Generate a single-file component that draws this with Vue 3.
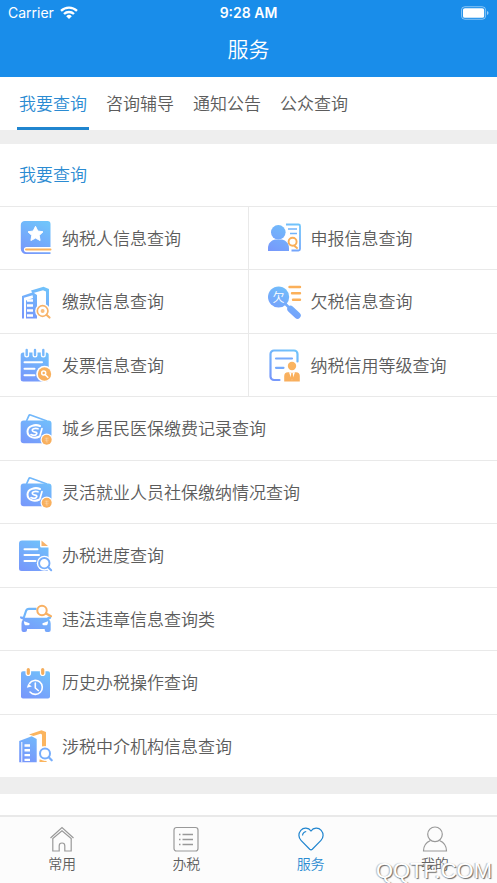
<template>
  <div class="page">
    <header class="header">
      <div class="status">
        <div class="carrier">
          <span>Carrier</span>
          <svg class="wifi" viewBox="0 0 18 13" aria-hidden="true">
            <g fill="none" stroke="#fff" stroke-width="2.3">
              <path d="M1 4.8a11.5 11.5 0 0 1 16 0" />
              <path d="M4 8a7.2 7.2 0 0 1 10 0" />
            </g>
            <path d="M9 13 6.2 10.2a4 4 0 0 1 5.6 0z" fill="#fff" />
          </svg>
        </div>
        <span class="time">9:28 AM</span>
        <div class="power">
          <svg class="battery" viewBox="0 0 29 14" aria-hidden="true">
            <rect x="0.5" y="0.5" width="25" height="13" rx="3.5" fill="none" stroke="#fff" stroke-opacity="0.5" />
            <rect x="2" y="2" width="22" height="10" rx="2" fill="#fff" />
            <path d="M27 5v4q1.5-.6 1.5-2T27 5z" fill="#fff" fill-opacity="0.6" />
          </svg>
        </div>
      </div>
      <h1 class="title">服务</h1>
    </header>

    <nav class="tabs">
      <button
        v-for="(tab, i) in tabs"
        :key="tab"
        type="button"
        class="tab"
        :class="{ active: i === activeTab }"
        @click="activeTab = i"
      >
        {{ tab }}
      </button>
    </nav>

    <main class="content">
      <section class="panel">
        <h2 class="panel-title">我要查询</h2>
        <ul class="grid">
          <li v-for="item in items" :key="item.name" class="cell" :class="{ wide: item.wide }">
            <a href="#" class="link" @click.prevent>
              <svg class="icon" viewBox="0 0 36 36" aria-hidden="true">
                <g v-if="item.icon === 'book'">
                  <path d="M7 1h22.500a3 3 0 0 1 3 3v23H8.500a2.500 2.500 0 0 0 0 5.200h24V34H8a5.200 5.200 0 0 1-5.200-5.200V5A4 4 0 0 1 7 1z" fill="url(#blue)" />
                  <path d="m17.500 6.300 2.300 4.700 5.200.8-3.800 3.600.9 5.100-4.600-2.400-4.600 2.400.9-5.100-3.800-3.600 5.200-.8z" fill="#fff" stroke="#fff" stroke-linejoin="round" />
                  <path d="M8 29.500h24.500" stroke="#fbb25c" stroke-width="2" stroke-linecap="round" />
                </g>

                <g v-else-if="item.icon === 'declare'">
                  <path d="M19 4.500h12.500a1.500 1.500 0 0 1 1.500 1.500v23a1.500 1.500 0 0 1-1.500 1.500h-7" fill="none" stroke="url(#blue)" stroke-width="1.800" />
                  <path d="M21 9h9M23 13.500h7" stroke="#72b4fb" stroke-width="1.600" />
                  <circle cx="11.300" cy="12.300" r="7.300" fill="url(#blue)" />
                  <path d="M1 31v-3c0-4.500 3-7.500 7-8.500h7c4 1 7 4 7 8.500v3z" fill="url(#blue)" />
                  <circle cx="25.600" cy="21.800" r="4" fill="#fff" stroke="#f9ae58" stroke-width="1.900" />
                  <path d="m27.500 26 2.500 2" stroke="#f9ae58" stroke-width="2" stroke-linecap="round" />
                </g>

                <g v-else-if="item.icon === 'payment'">
                  <path d="m13 6.500 12.500-3.700L31 5v18l-3-2V7.500l-3-1.300-10.500 3z" fill="url(#blue)" />
                  <path d="m4 12 11-3.700L19 11v23.500H4zm2 1.800v20.700h2v-18l7-2.500-.4-2.800z" fill="url(#blue)" fill-rule="evenodd" />
                  <path d="M9 16.500h6M9 21.500h6M9 26.500h6M9 31.500h6" stroke="#fff" stroke-width="2.600" />
                  <circle cx="24.600" cy="27" r="7.500" fill="#fff" />
                  <circle cx="24.600" cy="27" r="5.300" fill="#fff" stroke="#f7b267" stroke-width="1.700" />
                  <circle cx="24.600" cy="27" r="2" fill="#f9bd7b" />
                  <path d="m28.700 31 2.800 2.500" stroke="#f7b267" stroke-width="2.200" stroke-linecap="round" />
                </g>

                <g v-else-if="item.icon === 'arrears'">
                  <path d="m18 19.500 4.500 4.500" stroke="#76acfc" stroke-width="2.500" />
                  <path d="m23.500 25 7 6.500" stroke="url(#blue)" stroke-width="6.500" stroke-linecap="round" />
                  <circle cx="11.600" cy="13" r="10.600" fill="url(#blue)" />
                  <path d="M22.500 3h10.500M25 9.300h8M26 15.700h7" stroke="#fbb05a" stroke-width="2.400" stroke-linecap="round" />
                  <text x="11.600" y="17.500" text-anchor="middle" class="glyph">欠</text>
                </g>

                <g v-else-if="item.icon === 'invoice'">
                  <rect x="2.700" y="5.500" width="28" height="29" rx="2.500" fill="url(#blue)" />
                  <path d="M8.700 3v5M17 3v5M25.300 3v5" stroke="#fff" stroke-width="5" stroke-linecap="round" />
                  <path d="M8.700 3v5M17 3v5M25.300 3v5" stroke="#78b8fc" stroke-width="2.400" stroke-linecap="round" />
                  <path d="M6.500 15.200H24M6.500 21.800h10M6.500 28.200h10" stroke="#fff" stroke-width="2" stroke-linecap="round" />
                  <circle cx="26.500" cy="27" r="8.300" fill="#fff" />
                  <circle cx="26.500" cy="27" r="6.700" fill="url(#orange)" />
                  <circle cx="25.700" cy="26" r="2" fill="none" stroke="#fff" stroke-width="1.500" />
                  <path d="m27.200 27.700 2.600 2.600" stroke="#fff" stroke-width="1.600" stroke-linecap="round" />
                </g>

                <g v-else-if="item.icon === 'credit'">
                  <path d="M30.500 14.500V7a3.500 3.500 0 0 0-3.500-3.500H7A3.500 3.500 0 0 0 3.500 7v22.500A3.500 3.500 0 0 0 7 33h5.500" fill="none" stroke="url(#blue)" stroke-width="2.200" stroke-linecap="round" />
                  <path d="M9 11.500h16M9 20.800h7.500" stroke="#76aafc" stroke-width="2.200" stroke-linecap="round" />
                  <circle cx="25" cy="19" r="4.200" fill="url(#orange)" />
                  <path d="M17.200 34.500V29q0-3.800 3.800-3.800h8q3.800 0 3.800 3.800v5.500z" fill="url(#orange)" />
                  <path d="m22 25.200 3 8.300 3-8.300" fill="#fff" />
                  <path d="m24.300 26-.7 5.500 1.400 2 1.400-2-.7-5.500z" fill="#fbb05a" />
                </g>

                <g v-else-if="item.icon === 'wallet'">
                  <path d="m8.500 10 2.300-5.200q.5-1.200 1.700-.8l16.500 6" fill="none" stroke="#72b8fb" stroke-width="1.700" />
                  <rect x="2.700" y="9.500" width="30.800" height="22.700" rx="3" fill="url(#blue)" />
                  <path d="M22 15c-4.500-2-12.500-.3-12.500 5.500s7 7.500 12 5" fill="none" stroke="#fff" stroke-width="2" stroke-linecap="round" />
                  <path d="M20 17.800c-3-1-6.500.2-5.500 2s5.300.8 4.200 3-4.200 1.500-5.700.8M24 17.500l-2 7" fill="none" stroke="#fff" stroke-width="1.700" stroke-linecap="round" />
                  <circle cx="28.700" cy="28.700" r="6.200" fill="#fff" />
                  <circle cx="28.700" cy="28.700" r="5" fill="url(#orange)" />
                  <path d="M26.700 27.200h4M26.700 29.200h4M27.700 31h2.500M28.700 26.700v4" stroke="#fff" stroke-opacity="0.400" stroke-width="0.700" />
                </g>

                <g v-else-if="item.icon === 'progress'">
                  <path d="M4 2.500h18V8a1.500 1.500 0 0 0 1.500 1.500h7V31a2 2 0 0 1-2 2H3.500a2.500 2.500 0 0 1-2.500-2.500v-25a3 3 0 0 1 3-3z" fill="url(#blue)" />
                  <path d="M23.500 2.500 30 8h-6.500z" fill="#f8b36a" />
                  <path d="M6.500 11.300h13M6.500 17h14.500M6.500 23h11" stroke="#fff" stroke-width="2" stroke-linecap="round" />
                  <circle cx="26.300" cy="25.200" r="7.500" fill="#fff" />
                  <path d="m30 29 3.500 3.500" stroke="#fff" stroke-width="5" />
                  <circle cx="26.300" cy="25.200" r="5.200" fill="#fff" stroke="#76adfb" stroke-width="1.900" />
                  <path d="m30 29 3.200 3.200" stroke="#76adfb" stroke-width="2" stroke-linecap="round" />
                </g>

                <g v-else-if="item.icon === 'car'">
                  <path d="M5.500 17.500 8 10q.7-2.200 3-2.200h7.500" fill="none" stroke="#70b6fb" stroke-width="2.200" />
                  <path d="M2 15.500q3-.5 4 1.300h23q1-1.800 4-1.300.8 2.300-2 3 1.700 1.500 1.700 4V29q0 2-2 2h-2q-2 0-2-2v-1H9v1q0 2-2 2H5.500q-2 0-2-2v-6.500q0-2.500 1.500-4-3.500-.7-3-3z" fill="url(#blue)" />
                  <path d="m6 20.300 5.500 2q.5 2-1 2H7.500Q6 24 6 20.300zm24 0-5.500 2q-.5 2 1 2h3q1.500-.3 1.500-4z" fill="#fff" />
                  <circle cx="24" cy="9.500" r="4.700" fill="#fff" stroke="#f8b062" stroke-width="2" />
                  <path d="m28 12.500 5 2.700" stroke="#f8b062" stroke-width="2.200" stroke-linecap="round" />
                </g>

                <g v-else-if="item.icon === 'history'">
                  <rect x="3" y="6.200" width="29" height="27.300" rx="2" fill="url(#blue)" />
                  <path d="M10.300 4.500v3.800M24.700 4.500v3.800" stroke="#fff" stroke-width="5.600" stroke-linecap="round" />
                  <path d="M10.300 4.500v3.800M24.700 4.500v3.800" stroke="#f4ad5c" stroke-width="3.200" stroke-linecap="round" />
                  <path d="M11.500 18.500a7 7 0 1 1 .5 8.500" fill="none" stroke="#fff" stroke-width="1.600" stroke-linecap="round" />
                  <path d="m8.800 22.700 1.500-4 3.500 2.700z" fill="#fff" />
                  <path d="M17.300 18v5l3 2.500" fill="none" stroke="#fff" stroke-width="1.600" stroke-linecap="round" />
                </g>

                <g v-else-if="item.icon === 'agency'">
                  <path d="m11 6.500 12.500-4.300L28 4v14.500h-4V6.500l-1.500-.8-7 2.300z" fill="#fbb55f" />
                  <path d="M21.500 31.500H27l2 2.500h-7.500z" fill="#fbb55f" />
                  <path d="m1.200 13 12.500-4.700 5 2.700v23.200H1.200z" fill="url(#blue)" />
                  <path d="M3.800 14v20.200" stroke="#fff" stroke-width="1" />
                  <path d="M6.500 17.500h5.500M6.500 22.300h5.500M6.500 27.100h5.500M6.500 31.900h5.500" stroke="#fff" stroke-width="2.400" />
                  <circle cx="27" cy="25.600" r="7.300" fill="#fff" />
                  <circle cx="27" cy="25.600" r="5" fill="#fff" stroke="#76adfb" stroke-width="2" />
                  <path d="m30.700 29.300 3 3" stroke="#76adfb" stroke-width="2.200" stroke-linecap="round" />
                </g>
              </svg>
              <span class="name">{{ item.name }}</span>
            </a>
          </li>
        </ul>
      </section>
      <section class="panel next"></section>
    </main>

    <footer class="tabbar">
      <button
        v-for="entry in menu"
        :key="entry.name"
        type="button"
        class="menu"
        :class="{ active: entry.name === current }"
        @click="current = entry.name"
      >
        <svg class="menu-icon" viewBox="0 0 26 26" aria-hidden="true">
          <g v-if="entry.icon === 'home'">
            <path d="M1.500 12 13 1.500 24.500 12M3.800 12.500V25h6.400v-5.200a2.800 2.800 0 0 1 5.600 0V25h6.400V12.500L13 4.800z" />
          </g>
          <g v-else-if="entry.icon === 'list'">
            <rect x="1" y="1.500" width="24" height="23.500" rx="2.500" />
            <path d="M9.500 8.500H20M9.500 13.500H20M9.500 18.500H20M6 8.500h1.500M6 13.500h1.500M6 18.500h1.500" stroke-width="1.700" />
          </g>
          <g v-else-if="entry.icon === 'heart'">
            <path d="M13 5C10.500 1.300 5.500 1.300 2.800 4.300.2 7.300.3 11.500 3 14.300l8.700 8.900q1.300 1.200 2.600 0l8.700-8.900c2.700-2.800 2.800-7 .2-10C20.500 1.300 15.500 1.300 13 5z" />
            <path d="M4.500 9.500q.3-3.300 3.700-4" />
          </g>
          <g v-else>
            <circle cx="13" cy="8.300" r="7.300" />
            <path d="M8.500 14.500Q1.500 17.500 1.500 25h23q0-7.500-7-10.500" />
          </g>
        </svg>
        <span>{{ entry.name }}</span>
      </button>
      <span class="watermark">QQTF.COM</span>
    </footer>

    <svg class="defs" aria-hidden="true">
      <defs>
        <linearGradient id="blue" gradientUnits="userSpaceOnUse" x1="26" y1="2" x2="10" y2="34">
          <stop offset="0" stop-color="#70c4fb" />
          <stop offset="1" stop-color="#7798fb" />
        </linearGradient>
        <linearGradient id="orange" gradientUnits="userSpaceOnUse" x1="26" y1="15" x2="26" y2="35">
          <stop offset="0" stop-color="#fab562" />
          <stop offset="1" stop-color="#f8ae5c" />
        </linearGradient>
      </defs>
    </svg>
  </div>
</template>

<script setup>
import { ref } from "vue";

const tabs = ["我要查询", "咨询辅导", "通知公告", "公众查询"];
const activeTab = ref(0);

const items = [
  { name: "纳税人信息查询", icon: "book" },
  { name: "申报信息查询", icon: "declare" },
  { name: "缴款信息查询", icon: "payment" },
  { name: "欠税信息查询", icon: "arrears" },
  { name: "发票信息查询", icon: "invoice" },
  { name: "纳税信用等级查询", icon: "credit" },
  { name: "城乡居民医保缴费记录查询", icon: "wallet", wide: true },
  { name: "灵活就业人员社保缴纳情况查询", icon: "wallet", wide: true },
  { name: "办税进度查询", icon: "progress", wide: true },
  { name: "违法违章信息查询类", icon: "car", wide: true },
  { name: "历史办税操作查询", icon: "history", wide: true },
  { name: "涉税中介机构信息查询", icon: "agency", wide: true },
];

const menu = [
  { name: "常用", icon: "home" },
  { name: "办税", icon: "list" },
  { name: "服务", icon: "heart" },
  { name: "我的", icon: "user" },
];
const current = ref("服务");
</script>

<style>
body {
  margin: 0;
}
</style>

<style scoped>
.page {
  display: flex;
  flex-direction: column;
  height: 100vh;
  overflow: hidden;
  background: #fff;
  color: #5c5c5c;
  font-family: "Liberation Sans", "Noto Sans CJK SC", sans-serif;
  font-weight: 350;
}

.page * {
  box-sizing: border-box;
}

button {
  padding: 0;
  border: 0;
  background: none;
  color: inherit;
  font: inherit;
  cursor: pointer;
}

.header {
  flex: none;
  background: #198dea;
  color: #fff;
}

.status {
  display: grid;
  grid-template-columns: 1fr auto 1fr;
  align-items: center;
  height: 25px;
  padding: 0 8px;
  font-family: Inter, sans-serif;
  font-size: 14px;
  font-weight: 400;
}

.carrier {
  display: flex;
  align-items: center;
  gap: 6px;
}

.wifi {
  width: 18px;
  height: 13px;
}

.time {
  font-weight: 600;
}

.power {
  display: flex;
  justify-content: flex-end;
}

.battery {
  width: 28px;
  height: 14px;
}

.title {
  margin: 0;
  font-size: 21px;
  font-weight: 350;
  line-height: 50px;
  height: 52px;
  text-align: center;
}

.tabs {
  flex: none;
  display: flex;
  gap: 15px;
  height: 53px;
  padding: 0 17px;
}

.tab {
  height: 53px;
  padding: 0 2px;
  border-bottom: 3px solid transparent;
  font-size: 17px;
  white-space: nowrap;
}

.tab.active {
  border-bottom-color: #2085cf;
  color: #2b8bd2;
}

.content {
  flex: 1;
  min-height: 0;
  overflow: hidden;
  padding-top: 14px;
  background: #eee;
}

.panel {
  background: #fff;
}

.panel-title {
  margin: 0;
  padding-left: 19px;
  color: #2b8bd2;
  font-size: 17px;
  font-weight: 350;
  line-height: 64px;
  height: 62px;
}

.grid {
  display: grid;
  grid-template-columns: calc(50% - 1px) 1fr;
  grid-auto-rows: 63px 64px;
  margin: 0;
  padding: 0;
  list-style: none;
}

.cell {
  border-top: 1px solid #e9e9e9;
}

.cell:nth-child(even):not(.wide) {
  border-left: 1px solid #e9e9e9;
}

.wide {
  grid-column: 1 / -1;
}

.link {
  display: flex;
  align-items: center;
  gap: 8px;
  height: 100%;
  padding-left: 18px;
  color: inherit;
  font-size: 17px;
  text-decoration: none;
  white-space: nowrap;
}

.name {
  padding-bottom: 2px;
}

.icon {
  flex: none;
  width: 36px;
  height: 36px;
}

.glyph {
  fill: #fff;
  font-size: 12px;
}

.next {
  height: 62px;
  margin-top: 17px;
}

.tabbar {
  position: relative;
  flex: none;
  display: flex;
  height: 68px;
  border-top: 2px solid #e9e9e9;
  background: #fcfcfc;
}

.menu {
  flex: 1;
  display: flex;
  flex-direction: column;
  align-items: center;
  gap: 2px;
  padding-top: 9px;
  font-size: 14px;
  line-height: 20px;
}

.menu.active {
  color: #2b8bd2;
}

.menu-icon {
  width: 26px;
  height: 26px;
  fill: none;
  stroke: #999;
  stroke-width: 1.2;
}

.menu.active .menu-icon {
  stroke: #2085cf;
}

.watermark {
  position: absolute;
  right: 5px;
  bottom: 0;
  color: #fff;
  font-size: 22px;
  font-weight: 400;
  line-height: 25px;
  text-shadow: 1px 1px 1px #666, -1px 0 1px #bbb;
  pointer-events: none;
}

.defs {
  position: absolute;
  width: 0;
  height: 0;
}
</style>
